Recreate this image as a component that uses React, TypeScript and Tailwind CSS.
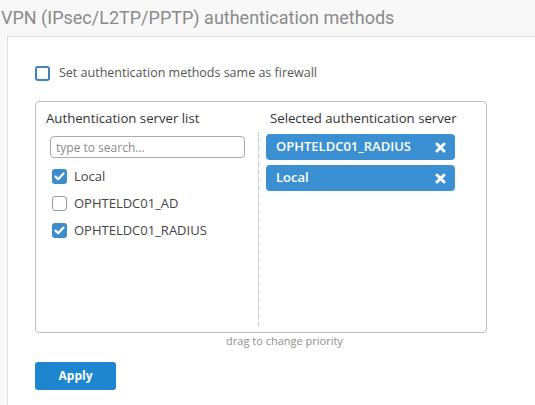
import React from "react";

function Check({ checked }: { checked: boolean }) {
  return checked ? (
    <span className="flex h-[15px] w-[15px] items-center justify-center rounded-[3px] bg-[#3a8ccc]">
      <svg width="11" height="9" viewBox="0 0 11 9" fill="none">
        <path d="M1.5 4.6 L4.2 7.2 L9.5 1.6" stroke="white" strokeWidth="2.2" strokeLinecap="round" strokeLinejoin="round" />
      </svg>
    </span>
  ) : (
    <span className="h-[15px] w-[15px] rounded-[3px] border border-[#9a9a9a] bg-white" />
  );
}

function Pill({ label }: { label: string }) {
  return (
    <div className="flex h-[26px] items-center justify-between rounded-[4px] bg-[#3a90d2] pl-[10px] pr-[9px] text-[13px] font-semibold text-white">
      <span>{label}</span>
      <svg width="11" height="11" viewBox="0 0 11 11">
        <path d="M2 2 L9 9 M9 2 L2 9" stroke="white" strokeWidth="3" strokeLinecap="round" />
      </svg>
    </div>
  );
}

export default function App() {
  const servers = [
    { name: "Local", checked: true },
    { name: "OPHTELDC01_AD", checked: false },
    { name: "OPHTELDC01_RADIUS", checked: true },
  ];

  return (
    <div className="h-[405px] w-[535px] overflow-hidden bg-[#f8f8f8] font-['Open_Sans',sans-serif]">
      <h1 className="pl-[1px] pt-[6px] font-['Roboto',sans-serif] text-[18px] leading-[24px] text-[#8a8a8a]">
        VPN (IPsec/L2TP/PPTP) authentication methods
      </h1>
      <div className="ml-[7px] mt-[6px] h-[400px] w-[560px] border border-[#dedede] bg-white pl-[27px] pt-[27px]">
        <label className="flex items-center gap-[9px] text-[12.5px] leading-[18px] text-[#555]">
          <span className="h-[15px] w-[15px] rounded-[3px] border-2 border-[#3f82b5] bg-white" />
          Set authentication methods same as firewall
        </label>

        <div className="mt-[19px] flex h-[232px] w-[452px] rounded-[4px] border border-[#bdbdbd]">
          <div className="w-[222px] pl-[10px] pt-[7px]">
            <h2 className="text-[13.2px] leading-[18px] text-[#333]">Authentication server list</h2>
            <input
              className="ml-[4px] mt-[9px] h-[22px] w-[195px] rounded-[4px] border border-[#aaa] px-[5px] text-[12px] outline-none placeholder:text-[#8a8a8a]"
              placeholder="type to search..."
            />
            <ul className="ml-[6px] mt-[10px] flex flex-col gap-[10px]">
              {servers.map((s) => (
                <li key={s.name} className="flex h-[17px] items-center gap-[7px] text-[13px] text-[#444]">
                  <Check checked={s.checked} />
                  {s.name}
                </li>
              ))}
            </ul>
          </div>
          <div className="mb-[6px] mt-[30px] border-l border-dotted border-[#bbb]" />
          <div className="flex-1 pl-[7px] pt-[7px]">
            <h2 className="pl-[4px] text-[13.2px] leading-[18px] text-[#333]">Selected authentication server</h2>
            <div className="mt-[7px] flex w-[189px] flex-col gap-[5px]">
              <Pill label="OPHTELDC01_RADIUS" />
              <Pill label="Local" />
            </div>
          </div>
        </div>
        <p className="w-[452px] pl-[47px] text-center text-[11px] leading-[15px] text-[#8f8f8f]">drag to change priority</p>
        <button className="mt-[14px] h-[28px] w-[81px] rounded-[3px] bg-[#1e86cf] text-[12px] font-bold text-white">
          Apply
        </button>
      </div>
    </div>
  );
}
